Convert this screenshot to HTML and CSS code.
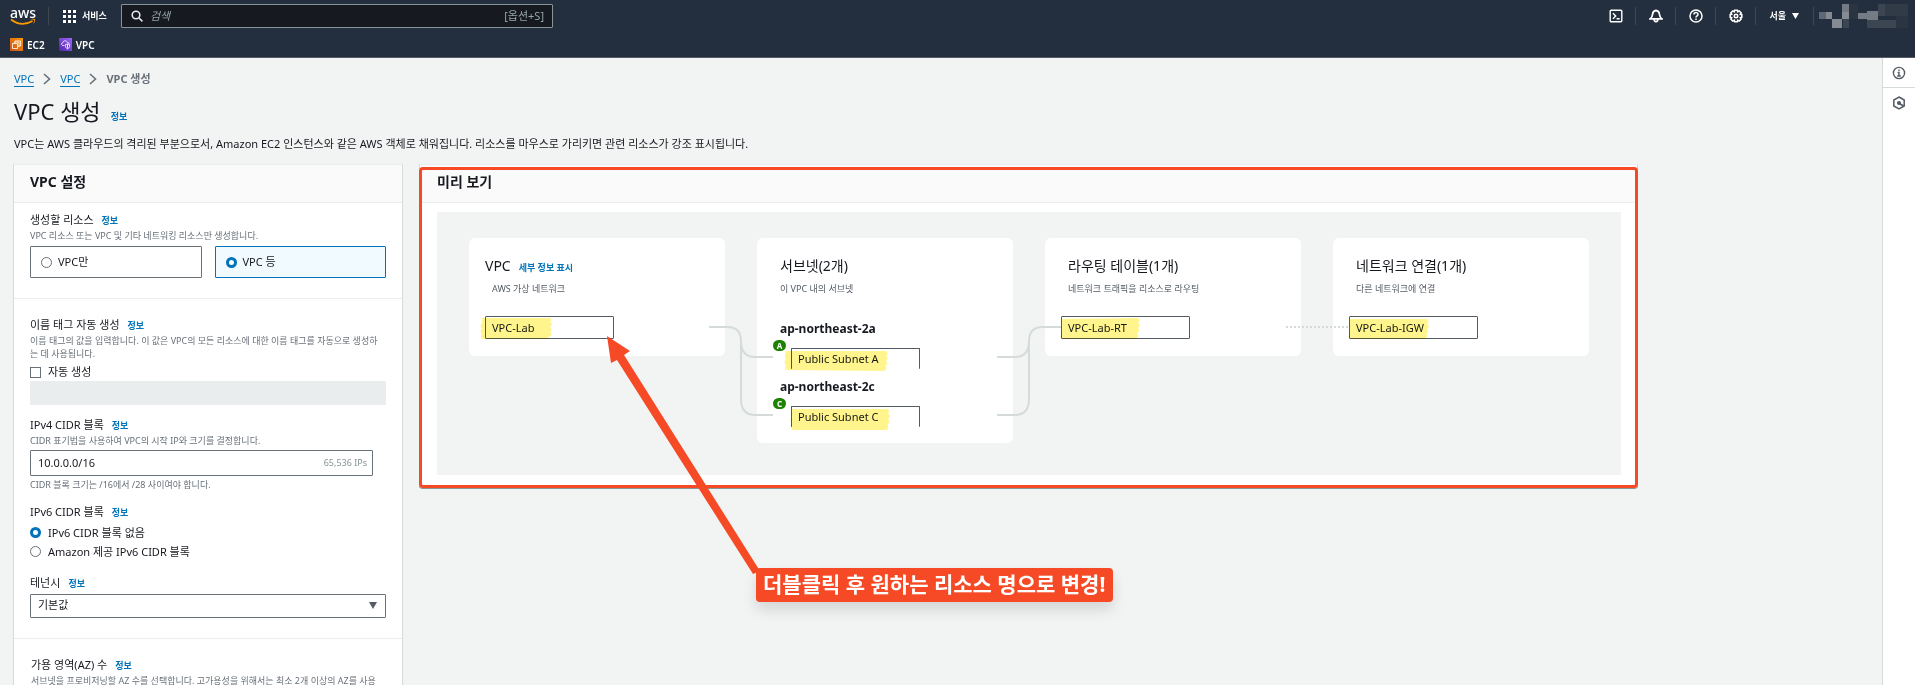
FILE: index.html
```html
<!DOCTYPE html>
<html lang="ko">
<head>
<meta charset="utf-8">
<title>VPC 생성</title>
<link rel="stylesheet" href="styles.css">
</head>
<body>
<header class="topbar">
  <div class="topbar-row">
    <a class="logo" href="#" aria-label="aws">
      <span class="logo-text">aws</span>
      <svg class="logo-smile" viewBox="0 0 26 7" width="26" height="7"><path d="M1 1.5C8 6.8 16 6.8 22.5 3" fill="none" stroke="#f90" stroke-width="1.7"/><path d="M20 1.2c2-.9 4.600-.6 5 0s-.1 3.200-1.700 4.700c.7-1.800 1.200-3.400.8-3.900s-2.300-.8-4.100-.8z" fill="#f90"/></svg>
    </a>
    <button class="services" type="button">
      <svg viewBox="0 0 13 13" width="13" height="13" fill="#fff"><path d="M0 0h3v3H0zM5 0h3v3H5zM10 0h3v3h-3zM0 5h3v3H0zM5 5h3v3H5zM10 5h3v3h-3zM0 10h3v3H0zM5 10h3v3H5zM10 10h3v3h-3z"/></svg>
      <span>서비스</span>
    </button>
    <label class="search">
      <svg viewBox="0 0 12 12" width="12" height="12" fill="none" stroke="#e4e8e8" stroke-width="1.600"><circle cx="5" cy="5" r="3.800"/><path d="M8 8l3.400 3.400"/></svg>
      <input class="search-input" type="text" placeholder="검색" aria-label="검색">
      <span class="search-key">[옵션+S]</span>
    </label>
    <nav class="tools">
      <button class="tool" type="button" aria-label="CloudShell"><svg viewBox="0 0 14 14" width="14" height="14" fill="none" stroke="#fff" stroke-width="1.400"><rect x="1.200" y="1.200" width="11.600" height="11.600" rx="1"/><path d="M4 4.300L6.700 7 4 9.700M7.600 9.800h3"/></svg></button>
      <button class="tool" type="button" aria-label="알림"><svg viewBox="0 0 14 14" width="14" height="14" fill="none" stroke="#fff" stroke-width="1.700"><path d="M1.300 9.800C3.400 8.200 3.300 7 3.600 5 3.900 2.900 5.200 1.700 7 1.700s3.100 1.200 3.400 3.300c.3 2 .2 3.200 2.300 4.800zM7 1.800V.4M5.200 10.200c0 3.300 3.600 3.300 3.600 0"/></svg></button>
      <button class="tool" type="button" aria-label="도움말"><svg viewBox="0 0 14 14" width="14" height="14" fill="none" stroke="#fff" stroke-width="1.500"><circle cx="7" cy="7" r="6"/><path d="M5 5.600C5 2.900 9 3 9 5.400 9 6.900 7 6.700 7 8.500M7 9.500V11"/></svg></button>
      <button class="tool" type="button" aria-label="설정"><svg viewBox="0 0 14 14" width="14" height="14" fill="none" stroke="#fff" stroke-width="1.600"><path d="M5.700 1.200h2.600l.4 1.500 1.500-.8 1.900 1.900-.8 1.500 1.500.4v2.600l-1.500.4.8 1.500-1.900 1.900-1.500-.8-.4 1.500H5.700l-.4-1.500-1.500.8-1.900-1.900.8-1.500-1.500-.4V5.700l1.500-.4-.8-1.500 1.900-1.900 1.500.8z"/><circle cx="7" cy="7" r="1.700"/></svg></button>
      <button class="region" type="button"><span>서울</span><svg viewBox="0 0 7 6" width="7" height="6"><path d="M0 0h7L3.500 6z" fill="#fff"/></svg></button>
      <div class="account">
        <svg viewBox="0 0 89 24" width="89" height="24"><path fill="#5f6873" d="M0 8h7v7H0z"/><path fill="#858b93" d="M7 8h6v7H7zM23 8h7v7h-7zM13 15h10v9H13z"/><path fill="#747b85" d="M23 0h7v8h-7zM39 9h9v6h-9zM48 7h11v9H48z"/><path fill="#2a3541" d="M30 0h9v15h-9zM77 12h12v12H77z"/><path fill="#3b4652" d="M24 15h6v9h-6zM48 16h29v8H48zM59 0h7v12h-7z"/><path fill="#303b47" d="M66 0h23v12H66z"/></svg>
      </div>
    </nav>
  </div>
  <nav class="favorites">
    <a class="fav" href="#"><svg viewBox="0 0 13 13" width="13" height="13"><defs><linearGradient id="ec2" x1="0" y1="1" x2="1" y2="0"><stop offset="0" stop-color="#c8511b"/><stop offset="1" stop-color="#f90"/></linearGradient></defs><path fill="url(#ec2)" d="M0 0h13v13H0z"/><path d="M2.500 5.500h5v5h-5zM5 4.500V3h5.500v5H8.500M4.500 5V4h4.500v4.500h-1" fill="none" stroke="#fff" stroke-width=".8"/></svg><span>EC2</span></a>
    <a class="fav" href="#"><svg viewBox="0 0 13 13" width="13" height="13"><defs><linearGradient id="vpc" x1="0" y1="1" x2="1" y2="0"><stop offset="0" stop-color="#4d27a8"/><stop offset="1" stop-color="#a166ff"/></linearGradient></defs><path fill="url(#vpc)" d="M0 0h13v13H0z"/><path d="M5.500 7.500H4c-2 0-2-2.600-.2-2.700C4 2.400 7.500 2 8.200 4.300c1.500 0 1.800.7 1.800 1.700M6.500 6.500L8.500 6l2 .5v2c0 1.200-1 1.800-2 2.300-1-.5-2-1.100-2-2.300zM8.500 6v4.500" fill="none" stroke="#fff" stroke-width=".8"/></svg><span>VPC</span></a>
  </nav>
</header>

<div class="shell">
<main class="main">
  <nav class="crumbs">
    <a class="crumb" href="#">VPC</a>
    <svg viewBox="0 0 8 12" width="8" height="12"><path d="M1 1l5.500 5L1 11" fill="none" stroke="#687078" stroke-width="1.600"/></svg>
    <a class="crumb" href="#">VPC</a>
    <svg viewBox="0 0 8 12" width="8" height="12"><path d="M1 1l5.500 5L1 11" fill="none" stroke="#687078" stroke-width="1.600"/></svg>
    <span class="crumb-here">VPC 생성</span>
  </nav>
  <div class="title-row"><h1 class="title">VPC 생성</h1><a class="info" href="#">정보</a></div>
  <p class="intro">VPC는 AWS 클라우드의 격리된 부분으로서, Amazon EC2 인스턴스와 같은 AWS 객체로 채워집니다. 리소스를 마우스로 가리키면 관련 리소스가 강조 표시됩니다.</p>

  <div class="columns">
    <form class="panel">
      <h2 class="panel-title">VPC 설정</h2>
      <section class="section section-first">
        <div class="label">생성할 리소스<a class="info" href="#">정보</a></div>
        <p class="hint">VPC 리소스 또는 VPC 및 기타 네트워킹 리소스만 생성합니다.</p>
        <div class="tiles">
          <label class="tile"><input class="radio" type="radio" name="kind"><span>VPC만</span></label>
          <label class="tile tile-on"><input class="radio" type="radio" name="kind" checked><span>VPC 등</span></label>
        </div>
      </section>
      <section class="section">
        <div class="label"><label for="nametag">이름 태그 자동 생성</label><a class="info" href="#">정보</a></div>
        <p class="hint">이름 태그의 값을 입력합니다. 이 값은 VPC의 모든 리소스에 대한 이름 태그를 자동으로 생성하는 데 사용됩니다.</p>
        <label class="choice choice-auto"><input class="check" type="checkbox"><span>자동 생성</span></label>
        <input class="field field-off" id="nametag" type="text" disabled>

        <div class="label group"><label for="cidr">IPv4 CIDR 블록</label><a class="info" href="#">정보</a></div>
        <p class="hint">CIDR 표기법을 사용하여 VPC의 시작 IP와 크기를 결정합니다.</p>
        <div class="field cidr"><input class="cidr-input" id="cidr" type="text" value="10.0.0.0/16"><span class="cidr-count">65,536 IPs</span></div>
        <p class="hint hint-after">CIDR 블록 크기는 /16에서 /28 사이여야 합니다.</p>

        <div class="label group">IPv6 CIDR 블록<a class="info" href="#">정보</a></div>
        <div class="choices">
          <label class="choice"><input class="radio" type="radio" name="v6" checked><span>IPv6 CIDR 블록 없음</span></label>
          <label class="choice"><input class="radio" type="radio" name="v6"><span>Amazon 제공 IPv6 CIDR 블록</span></label>
        </div>

        <div class="label group"><label for="tenancy">테넌시</label><a class="info" href="#">정보</a></div>
        <div class="select-wrap">
          <select class="field select" id="tenancy"><option>기본값</option></select>
          <svg class="select-arrow" viewBox="0 0 8 7" width="8" height="7"><path d="M0 0h8L4 7z" fill="#545b64"/></svg>
        </div>
      </section>
      <section class="section section-az">
        <div class="label">가용 영역(AZ) 수<a class="info" href="#">정보</a></div>
        <p class="hint">서브넷을 프로비저닝할 AZ 수를 선택합니다. 고가용성을 위해서는 최소 2개 이상의 AZ를 사용</p>
      </section>
    </form>

    <section class="panel preview">
      <h2 class="panel-title">미리 보기</h2>
      <div class="canvas">
        <div class="nodes">
          <article class="node">
            <h3 class="node-title node-title-vpc">VPC<a class="info" href="#">세부 정보 표시</a></h3>
            <p class="node-note">AWS 가상 네트워크</p>
            <input class="name" type="text" value="VPC-Lab" aria-label="VPC 이름">
          </article>
          <article class="node node-tall">
            <h3 class="node-title">서브넷(2개)</h3>
            <p class="node-note">이 VPC 내의 서브넷</p>
            <h4 class="zone">ap-northeast-2a</h4>
            <div class="subnet"><span class="badge">A</span><input class="name name-cut" type="text" value="Public Subnet A" aria-label="서브넷 A 이름"></div>
            <h4 class="zone">ap-northeast-2c</h4>
            <div class="subnet"><span class="badge">C</span><input class="name name-cut" type="text" value="Public Subnet C" aria-label="서브넷 C 이름"></div>
          </article>
          <article class="node">
            <h3 class="node-title">라우팅 테이블(1개)</h3>
            <p class="node-note">네트워크 트래픽을 리소스로 라우팅</p>
            <input class="name" type="text" value="VPC-Lab-RT" aria-label="라우팅 테이블 이름">
          </article>
          <article class="node">
            <h3 class="node-title">네트워크 연결(1개)</h3>
            <p class="node-note">다른 네트워크에 연결</p>
            <input class="name" type="text" value="VPC-Lab-IGW" aria-label="네트워크 연결 이름">
          </article>
        </div>
        <svg class="overlay" viewBox="0 0 1184 263" width="1184" height="263" fill="none" stroke="#d5dbdb" stroke-width="2">
          <path d="M272 115h18q14 0 14 14v58q0 16 14 16h18M304 129q0 16 14 16h18"/>
          <path d="M560 203h18q14 0 14-16v-58q0-14 14-14h18M560 145h18q14 0 14-16"/>
          <path d="M849 115h63" stroke-dasharray="2 2"/>
        </svg>
        <svg class="overlay marker" viewBox="0 0 1184 263" width="1184" height="263" fill="#fff58c">
          <path d="M45 106h68q3 2 0 4 4 2 0 5 3 3 0 5 3 3-1 5l-2 2H45q-2-2 0-5-3-2 0-5-3-3 0-6z"/>
          <path d="M349 139h100q3 2 0 5 3 2 0 5 3 3-1 5 3 3-1 5l-98-1q-2-3 0-5-3-3 0-6-2-3 0-8z"/>
          <path d="M355 197h96q2 3 0 5 4 2 0 5 3 3 0 5 1 3-1 6h-95q-2-4 0-7-3-2 0-5-2-3 0-9z"/>
          <path d="M625 107l76-1q3 2 0 5 3 3 0 5 3 3-1 5 3 3-1 6h-74q-2-4 0-8z"/>
          <path d="M913 107h77q3 2 0 5 4 3 0 5 3 3-1 5 3 2-1 5h-75q-2-4 0-8z"/>
        </svg>
        <svg class="overlay arrow" viewBox="0 0 340 380" width="340" height="380"><path d="M170 124l23 15-6 4 136 216-7 3L180 148l-6 3z" fill="#f54a25"/></svg>
        <div class="callout">더블클릭 후 원하는 리소스 명으로 변경!</div>
      </div>
    </section>
  </div>
</main>
<aside class="rail">
  <button class="rail-btn" type="button" aria-label="정보"><svg viewBox="0 0 14 14" width="14" height="14" fill="none" stroke="#545b64" stroke-width="1.400"><circle cx="7" cy="7" r="5.600"/><path d="M7 3.500V5M5.600 6.500H7v3.300M5.200 10h3.600"/></svg></button>
  <button class="rail-btn" type="button" aria-label="진단"><svg viewBox="0 0 14 14" width="14" height="14" fill="none" stroke="#545b64" stroke-width="1.500"><path d="M7 1l5.200 3v6L7 13l-5.200-3V4z"/><circle cx="7" cy="7" r="1.300" fill="#545b64"/><path d="M7.500 7.500l4 2.500"/></svg></button>
</aside>
</div>
</body>
</html>
```

FILE: styles.css
```css
* { box-sizing: border-box; }
html, body { height: 100%; }
body {
  margin: 0;
  display: flex;
  flex-direction: column;
  overflow: hidden;
  background: #f2f3f3;
  color: #16191f;
  font-family: "Noto Sans", "Noto Sans CJK KR", sans-serif;
  font-size: 11px;
  line-height: 16px;
}
h1, h2, h3, h4, p { margin: 0; font-weight: 400; }
button, input, select { font: inherit; color: inherit; margin: 0; padding: 0; border: 0; background: none; }
a { color: #0073bb; text-decoration: none; }
svg { display: block; flex: none; }

/* top bar */
.topbar { flex: none; background: #232f3e; border-bottom: 1px solid #545b64; color: #fff; }
.topbar-row { display: flex; align-items: center; height: 32px; padding-left: 10px; }
.logo { display: block; width: 39px; height: 18px; border-right: 1px solid #414750; color: #fff; }
.logo-text { display: block; font-size: 14px; line-height: 11px; font-weight: 500; }
.services { display: flex; align-items: center; gap: 6px; width: 72px; padding-left: 14px; font-size: 9px; font-weight: 700; white-space: nowrap; }
.search { display: flex; align-items: center; width: 432px; height: 24px; padding: 0 8px 0 9px; border: 1px solid #879596; border-radius: 1px; background: #16191f; }
.search-input { flex: 1; min-width: 0; margin-left: 7px; font-style: italic; }
.search-input::placeholder { color: #95a5a6; opacity: 1; }
.search-key { color: #95a5a6; }
.tools { display: flex; align-items: center; margin-left: auto; }
.tool { display: flex; align-items: center; justify-content: center; width: 40px; height: 18px; border-right: 1px solid #414750; }
.region { display: flex; align-items: center; gap: 6px; height: 18px; padding: 0 14px 0 13px; border-right: 1px solid #414750; font-size: 9px; font-weight: 700; }
.account { padding: 0 7px 0 5px; }
.favorites { display: flex; gap: 14px; height: 25px; padding: 0 10px; align-items: center; }
.fav { display: flex; align-items: center; gap: 4px; color: #fff; font-size: 10px; font-weight: 600; }

/* page */
.shell { flex: 1; display: flex; min-height: 0; }
.main { flex: 1; min-width: 0; padding: 12px 0 0 13px; overflow: hidden; }
.rail { flex: none; width: 33px; background: #fff; border-left: 1px solid #d5dbdb; }
.rail-btn { display: flex; align-items: center; justify-content: center; width: 100%; height: 30px; }
.rail-btn:first-child { border-bottom: 1px solid #d5dbdb; }
.crumbs { display: flex; align-items: center; gap: 9px; height: 18px; padding-left: 1px; }
.crumb { border-bottom: 1px solid #0073bb; line-height: 15px; }
.crumb-here { color: #687078; font-weight: 700; }
.title-row { display: flex; align-items: baseline; height: 30px; margin-top: 9px; padding-left: 1px; }
.title { font-size: 22px; line-height: 28px; }
.info { margin-left: 8px; font-size: 9px; font-weight: 700; }
.title-row .info { margin-left: 10px; }
.intro { margin-top: 8px; padding-left: 1px; line-height: 18px; }
.columns { display: grid; grid-template-columns: 390px minmax(0, 1fr); gap: 16px; align-items: start; max-width: 1625px; margin-top: 11px; }

/* panels */
.panel { background: #fff; border: 1px solid #d5dbdb; border-top-color: #eaeded; }
.panel-title { padding: 7px 16px 10px; border-bottom: 1px solid #eaeded; background: #fafafa; font-size: 14px; line-height: 20px; font-weight: 700; }
.section { padding: 18px 16px 20px; border-top: 1px solid #eaeded; }
.section-first { padding-top: 9px; border-top: 0; }
.section-az { padding-left: 17px; }
.label { display: flex; align-items: baseline; height: 16px; line-height: 16px; }
.group { margin-top: 12px; }
.hint { margin-top: 1px; padding-right: 4px; color: #687078; font-size: 9px; line-height: 13px; }
.hint-after { margin: 2px 0 13px; }
.tiles { display: grid; grid-template-columns: 1fr 1fr; gap: 13px; margin-top: 4px; }
.tile { display: flex; align-items: center; gap: 6px; height: 32px; padding: 0 10px; border: 1px solid #687078; border-radius: 1px; }
.tile-on { border-color: #0073bb; background: #f1faff; }
.radio, .check { appearance: none; flex: none; width: 11px; height: 11px; border: 1px solid #687078; background: #fff; }
.radio { border-radius: 50%; }
.radio:checked { border: 3px solid #0073bb; }
.choice { display: flex; align-items: center; gap: 7px; height: 19px; }
.choice-auto { height: 18px; margin-top: 3px; }
.choices { padding: 3px 0 2px; }
.field { display: block; width: 100%; height: 24px; border: 1px solid #687078; border-radius: 1px; background: #fff; }
.field-off { border-color: #eaeded; background: #eaeded; }
.cidr { display: flex; align-items: center; width: auto; height: 26px; margin: 3px 13px 0 0; padding: 0 5px 0 7px; }
.cidr-input { flex: 1; min-width: 0; }
.cidr-count { color: #879596; font-size: 9px; }
.hint-after + .group { margin-top: 0; }
.select-wrap { position: relative; margin-top: 3px; }
.select { appearance: none; padding: 0 7px 2px; }
.select-arrow { position: absolute; right: 9px; top: 8px; pointer-events: none; }

/* preview */
.preview { position: relative; padding-bottom: 12px; }
.preview::after { content: ""; position: absolute; inset: 2px -1px -1px; border: 3px solid #f54a25; border-radius: 4px; box-shadow: 0 1px 0 #879596; pointer-events: none; }
.preview .panel-title { padding-left: 17px; }
.canvas { position: relative; margin: 9px 16px 0 17px; padding: 26px 32px 32px; background: #f2f3f3; }
.nodes { display: flex; align-items: flex-start; gap: 32px; }
.node { flex: none; width: 256px; height: 118px; padding: 18px 16px 0; border-radius: 6px; background: #fff; }
.node-tall { height: 205px; }
.node-title { height: 20px; padding-left: 7px; font-size: 14px; line-height: 20px; }
.node-title-vpc { padding-left: 0; }
.node-note { padding-left: 7px; margin: 6px 0 20px; color: #545b64; font-size: 9px; line-height: 14px; }
.name { display: block; width: 129px; height: 23px; padding: 0 6px; border: 1px solid #545b64; border-radius: 1px; background: #fff; }
.zone { padding: 4px 0 0 7px; font-size: 12px; line-height: 18px; font-weight: 700; }
.subnet { display: flex; align-items: flex-start; gap: 5px; height: 36px; }
.badge { width: 13px; height: 11px; margin-top: 2px; border-radius: 6px; background: #1d8102; color: #fff; font-size: 8px; line-height: 11px; font-weight: 700; text-align: center; }
.name-cut { height: 21px; margin-top: 10px; padding-bottom: 2px; border-bottom: 0; }
.overlay { position: absolute; left: 0; top: 0; pointer-events: none; }
.marker { mix-blend-mode: multiply; }
.arrow { z-index: 2; }
.callout { position: absolute; z-index: 2; left: 319px; top: 356px; padding: 0 8px 2px 7px; border-radius: 4px; background: #f54a25; box-shadow: 0 8px 14px rgba(0, 0, 0, .12); color: #fff; font-size: 21px; line-height: 32px; font-weight: 700; white-space: nowrap; }
```
